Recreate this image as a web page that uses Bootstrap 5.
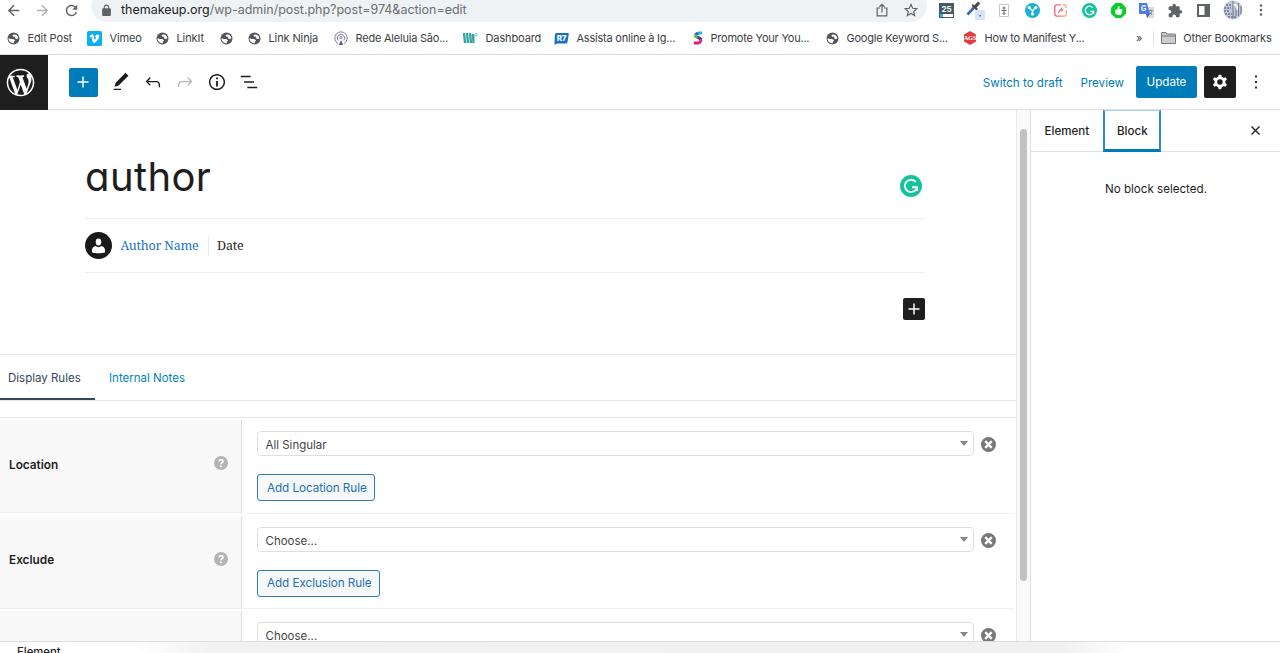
<!DOCTYPE html>
<html lang="en">
<head>
<meta charset="utf-8">
<meta name="viewport" content="width=device-width, initial-scale=1">
<title>Edit Post</title>
<link href="https://cdn.jsdelivr.net/npm/bootstrap@5.3.0/dist/css/bootstrap.min.css" rel="stylesheet">
<style>
body{font-family:Inter,"Liberation Sans",sans-serif;font-size:11.6px;line-height:1.4;color:#1e1e1e;height:653px;overflow:hidden;background:#fff}
svg{display:block;flex:none}
.ic{fill:currentColor}
/* browser chrome */
.addressbar{height:20px;color:#5f6368}
.omnibox{left:91px;width:836px;height:32px;margin-top:-10.5px;border-radius:16px;background:#eff2f4}
.nav-ico{display:grid;grid-template-columns:29px 29px 33px;width:91px;padding-left:5px}
.site{padding-left:10px}
.url{font-size:12.5px;letter-spacing:-.02px;color:#6a6e72;line-height:20px;padding-left:9px;white-space:nowrap}
.url b{font-weight:400;color:#202124}
.exts{display:grid;grid-template-columns:repeat(12,28.63px);justify-items:center;align-items:center;width:344px;margin-right:4px}
.bookmarks{height:35px;padding-top:3px;font-size:11px;letter-spacing:-.12px;color:#3c4043;border-bottom:1px solid #dcdee0;
 display:grid;grid-template-columns:80px 69px 64px 28px 86px 129px 91px 139px 133px 137px 169px 1fr;padding-left:7px;align-items:center;white-space:nowrap}
.bookmarks>div{display:flex;align-items:center;gap:7.5px}
.bookmarks>.long{letter-spacing:-.22px}
.bookmarks>.overflow-end{gap:7px;letter-spacing:-.15px}
.rule-v{height:15px;margin-left:4px}
/* editor header */
.ed-head{height:55px;border-bottom:1px solid #e0e0e0}
.wp-logo{width:47.5px;height:55px;background:#1e1e1e;padding-left:6px}
.tools{gap:10px;margin-left:21.3px}
.btn-sq{width:29px;height:29px;background:#007cba;border-radius:2px;margin-right:2px}
.wplink{color:#007cba;text-decoration:none;padding-top:2px}
.ed-head .btn-update{background:#007cba;color:#fff;width:61px;height:32px;border-radius:2px;padding:2px 0 0;font-size:11.6px;border:0}
.btn-cog{width:32px;height:32px;background:#1e1e1e;border-radius:2px;margin-left:7px}
.more{margin:0 13px 0 9px}
/* main area */
.stage{height:531px}
.canvas{width:1016px}
.post-block{width:840px;margin-left:85px}
.post-title{font-size:40px;font-weight:400;font-feature-settings:"cv11","ss03";letter-spacing:.4px;height:109px;padding-top:40px;line-height:54px;border-bottom:1px solid #e8eef2;margin:0}
.gram-badge{right:3px;top:65px}
.meta{height:54px;border-bottom:1px solid #e8eef2;font-family:"Noto Serif","Liberation Serif","DejaVu Serif",serif;font-size:12.5px;letter-spacing:-.2px;gap:8.5px}
.avatar{width:27px;height:27px}
.meta .byline{color:#1e73be;padding-right:9px;border-right:1px solid #e8e8e8;line-height:20px}
.inserter{width:22px;height:22px;background:#1e1e1e;border-radius:2px;margin-top:25px}
.panel-tabs{height:47px;margin-top:34px;border-top:1px solid #e2ecf1;border-bottom:1px solid #dfe7ec}
.panel-tabs a{font-size:11.5px;text-decoration:none;color:#0085ba;height:45px;line-height:46px;padding:0 14px 0 8px}
.panel-tabs a.on{color:#32475a;border-bottom:2px solid #32475a;width:95px;margin-right:6px}
.rules{margin-top:16px;border-top:1px solid #dfe7ec;padding-top:2px}
.rule{height:95.5px}
.rule-label{width:242px;height:93px;background:#f9f9f9;border-right:1px solid #dcdfe1;border-bottom:1px solid #ededed;padding:0 13px 2px 9px;font-weight:600;font-size:11.8px}
.rule-body{width:770px;height:93.5px;border-bottom:1px solid #efefef;margin-left:2px;padding:11px 0 0 13px}
.picker-row{gap:7px}
.picker{width:717px;height:25px;border:1px solid #dedede;border-radius:4px;padding:4px 5px 0 7.5px;font-size:11.5px;color:#444}
.caret{border:4px solid transparent;border-top:5px solid #888;border-bottom:0;margin-top:-4px}
.drop{margin-top:2px}
.btn-rule{--bs-btn-color:#2271b1;--bs-btn-border-color:#2f7fbb;--bs-btn-bg:#f6f7f7;--bs-btn-padding-x:9px;--bs-btn-font-size:11.7px;--bs-btn-border-radius:3px;padding-top:2px;padding-bottom:0;height:27px;margin-top:18px;width:118px;white-space:nowrap;letter-spacing:-.05px}
.btn-rule.wide{width:122.5px}
.track{width:14px;background:#fafafa;border-left:1px solid #e9e9e9}
.thumb{width:7px;height:452px;background:#c1c1c1;border-radius:4px;margin:19px auto 0 3px}
.side{border-left:1.5px solid #e0e0e0}
.side-tabs{height:42px;border-bottom:1px solid #e0e0e0;font-weight:500}
.side-tabs .tab-off{padding:1px 14px 0 13.5px}
.side-tabs .block-tab{width:58px;height:42px;padding-top:4px;border:2px solid #2a8fc6;border-top:1px solid #a8d3e8;border-bottom:3px solid #007cba}
.side-tabs svg{margin-right:17px}
.empty-note{margin-top:29px;padding-left:1px}
.foot{height:12px;border-top:1px solid #dedede;background:linear-gradient(90deg,#fff 135px,#f1f1f1 215px,#f0f0f0 1060px,#fff 1130px);overflow:hidden;padding-left:17px;line-height:20px;font-size:11.3px;font-weight:500}
</style>
</head>
<body class="d-flex flex-column">
<svg width="0" height="0" class="position-absolute">
 <defs>
  <symbol id="globe" viewBox="0 0 24 24"><circle cx="12" cy="12" r="11" fill="#505458"/><path fill="#fff" d="M3 14.500 3 11l3.500 1.800 4.500.2c2 0 2.200 1.600 3.600 2.200-.2 2.200-2.400 2.500-2.400 5.800-4.300 0-8-2.600-9.200-6.500zM12.500 4.500c-2 .4-3 2-2 3.300 1.300 1.400 3.300.2 4.300 1.600.7 1.200 0 2.800 1.600 3.600 1.500.5 3-.2 4.600-1.400C20.800 7.500 17.500 4 12.500 4.500z"/></symbol>
  <symbol id="cross" viewBox="0 0 16 16"><circle cx="8" cy="8" r="8" fill="#777"/><path d="M4.500 4.500l7 7m0-7l-7 7" stroke="#fff" stroke-width="2.600"/></symbol>
  <symbol id="help" viewBox="0 0 14 14"><circle cx="7" cy="7" r="7" fill="#b4b4b4"/><path d="M5 5.300C5 3.300 9 3.300 9 5.400 9 6.700 7 6.700 7 8.200" fill="none" stroke="#fff" stroke-width="1.500"/><circle cx="7" cy="10.200" r=".95" fill="#fff"/></symbol>
  <symbol id="plus" viewBox="0 0 24 24"><path fill="#fff" d="M18 11.200h-5.200V6h-1.600v5.200H6v1.600h5.200V18h1.600v-5.200H18z"/></symbol>
  <symbol id="gram" viewBox="0 0 22 22"><circle cx="11" cy="11" r="11" fill="#15c39a"/><path d="M15.800 6.900A6.200 6.200 0 1 0 16.900 13M12 12.300h5V16" fill="none" stroke="#fff" stroke-width="1.900"/></symbol>
 </defs>
</svg>

<div class="addressbar d-flex align-items-center position-relative">
 <div class="omnibox position-absolute top-0"></div>
 <div class="nav-ico">
  <svg class="ic" width="17" height="17" viewBox="0 0 24 24"><path d="M20 11H7.830l5.590-5.590L12 4l-8 8 8 8 1.410-1.410L7.830 13H20v-2z"/></svg>
  <svg class="ic" width="17" height="17" viewBox="0 0 24 24" opacity=".5"><path d="M12 4l-1.410 1.410L16.170 11H4v2h12.170l-5.580 5.590L12 20l8-8z"/></svg>
  <svg class="ic" width="17" height="17" viewBox="0 0 24 24"><path d="M17.650 6.350A7.958 7.958 0 0012 4c-4.420 0-7.990 3.580-7.990 8s3.570 8 7.990 8c3.730 0 6.840-2.550 7.730-6h-2.080A5.990 5.990 0 0112 18c-3.310 0-6-2.690-6-6s2.690-6 6-6c1.660 0 3.140.69 4.220 1.780L13 11h7V4l-2.350 2.350z"/></svg>
 </div>
 <div class="site d-flex align-items-center flex-grow-1 position-relative">
  <svg class="ic" width="11" height="12" viewBox="3 0 18 22"><path d="M18 8h-1V6c0-2.760-2.240-5-5-5S7 3.240 7 6v2H6c-1.100 0-2 .9-2 2v10c0 1.100.9 2 2 2h12c1.100 0 2-.9 2-2V10c0-1.100-.9-2-2-2zM9 8V6c0-1.660 1.340-3 3-3s3 1.340 3 3v2z"/></svg>
  <span class="url flex-grow-1"><b>themakeup.org</b>/wp-admin/post.php?post=974&amp;action=edit</span>
  <svg width="12" height="14" viewBox="0 0 12 14" fill="none" stroke="#5f6368" stroke-width="1.200"><path d="M4 5H1.200v7.800h9.600V5H8M6 9.500V1.500M3.500 3.700L6 1.300l2.500 2.400"/></svg>
  <svg class="ms-3" style="margin-right:14px" width="14" height="14" viewBox="0 0 24 24" fill="none" stroke="#5f6368" stroke-width="2"><path d="M12 2.500l2.900 6.600 7.100.7-5.400 4.700 1.600 7-6.200-3.700-6.200 3.700 1.600-7L2 9.800l7.100-.7z"/></svg>
 </div>
 <div class="exts position-relative">
  <svg width="15" height="15" viewBox="0 0 15 15"><path fill="#455a64" d="M0 0h15v15H0z"/><path fill="#fff" d="M1 11h13v3H1z"/><path fill="#29b6f6" d="M1 11h3v3H1z"/><text x="7.500" y="8.500" font-size="8" font-weight="700" fill="#fff" text-anchor="middle">25</text></svg>
  <svg width="20" height="20" viewBox="0 0 20 20"><path d="M2.500 14.500L9 7.500" stroke="#4067b5" stroke-width="2.600"/><path d="M8 5.500l3.500 3.500" stroke="#4a4a4a" stroke-width="2.400" stroke-linecap="round"/><path d="M10.500 6.500l2.700-3" stroke="#4a4a4a" stroke-width="3.200" stroke-linecap="round"/><rect x="10" y="10" width="10" height="10" rx="1.500" fill="#d5e3fb"/><path fill="#456" d="M14.500 15h1.300v1.400h-1.300z"/></svg>
  <svg width="10" height="13" viewBox="0 0 10 13" fill="none" stroke="#666"><path d="M.5.500h9v12h-9z" stroke="#c5c5c5"/><path d="M5 2.500v3M3.500 4h3M2.500 6.500h5M5 7v3.500M3.500 9L5 10.500 6.500 9" stroke-width="1"/></svg>
  <svg width="15" height="15" viewBox="0 0 15 15"><circle cx="7.500" cy="7.500" r="7.500" fill="#1ab1d3"/><path d="M4.300 4.500L7.500 8l3.200-3.500M7.500 8v3.500" fill="none" stroke="#fff" stroke-width="1.400"/><g fill="#fff"><circle cx="4.200" cy="4.500" r="1.600"/><circle cx="10.800" cy="4.500" r="1.600"/><circle cx="7.500" cy="11" r="1.600"/></g></svg>
  <svg width="13" height="13" viewBox="0 0 13 13" fill="none"><defs><linearGradient id="lg"><stop stop-color="#f0566c"/><stop offset="1" stop-color="#f7a26c"/></linearGradient></defs><path d="M7 .8H3A2.200 2.200 0 0 0 .8 3v7A2.200 2.200 0 0 0 3 12.200h7a2.200 2.200 0 0 0 2.200-2.200V6M9 .8h1A2.200 2.200 0 0 1 12.200 3v1" stroke="url(#lg)" stroke-width="1.200"/><path d="M4.500 9L6 5.800h2.500L7.300 7.500M7 5l1.300-1.300" stroke="#ef6a70" stroke-width="1.200"/></svg>
  <svg width="15" height="15"><use href="#gram"/></svg>
  <svg width="15" height="15" viewBox="0 0 15 15"><path d="M4.500 0h6L15 4.500v6L10.500 15h-6L0 10.500v-6z" fill="#05cf28"/><path fill="#fff" d="M4 7l2.300-.6L7.300 3c1.400-.2 1.500.8 1 3h2.400c1 0 .8 1.200.5 2l-.8 3c-.2.800-.6 1-1.400 1H6.500L4 10.500z"/></svg>
  <svg width="15" height="15" viewBox="0 0 15 15"><path fill="#d8dadd" d="M5 4h10v11H8z"/><path fill="#4a7de2" d="M0 0h8l3 11H1a1 1 0 0 1-1-1z"/><path fill="#3367c5" d="M7 11h4l-3 4z"/><text x="4.700" y="7.500" font-size="7" font-weight="700" fill="#fff" text-anchor="middle">G</text><path d="M9.500 7.500H14M11.800 6.500v1M13 8c-.5 2-1.500 3-2.500 3.500M10.500 8.500L13 12" stroke="#777" stroke-width=".8" fill="none"/></svg>
  <svg class="ic" width="15" height="15" viewBox="1 0 23 23"><path d="M20.500 11H19V7c0-1.100-.9-2-2-2h-4V3.500a2.500 2.500 0 00-5 0V5H4c-1.100 0-2 .9-2 2v3.800h1.500a2.700 2.700 0 010 5.400H2V20c0 1.100.9 2 2 2h3.800v-1.500a2.700 2.700 0 015.400 0V22H17c1.100 0 2-.9 2-2v-4h1.500a2.500 2.500 0 000-5z"/></svg>
  <svg width="13" height="13" viewBox="0 0 13 13"><path d="M1 1h11v11H1z" fill="none" stroke="#5f6368" stroke-width="2"/><path fill="#5f6368" d="M7.500 1H12v11H7.500z"/></svg>
  <svg width="20" height="20" viewBox="0 0 20 20"><circle cx="10" cy="10" r="9.600" fill="#c3c9d8"/><path d="M3 5h6M1 8h7M1 11h6M2 14h7M5 17h8" stroke="#6572a0" stroke-width="1.500" stroke-dasharray="2 1"/><path d="M10 1v18M15.500 3v13M13 8v8M18 6v8" stroke="#707a94" stroke-width="1.100"/><path d="M10.500 5c4-1 4 2 3.500 5" stroke="#fff" stroke-width="1.600" fill="none"/></svg>
  <svg class="ic" width="4" height="14" viewBox="0 0 4 14"><circle cx="2" cy="2.500" r="1.300"/><circle cx="2" cy="7" r="1.300"/><circle cx="2" cy="11.500" r="1.300"/></svg>
 </div>
</div>

<div class="bookmarks flex-shrink-0">
 <div><svg width="13" height="13"><use href="#globe"/></svg>Edit Post</div>
 <div><svg width="15" height="15" viewBox="0 0 15 15"><rect width="15" height="15" rx="1.500" fill="#0cb0ef"/><path fill="#fff" d="M2.500 5.300L5 3.300c1.500-.5 1.600 1.500 2.300 4.700.5 1.600 1.700-.8 1.700-1.500 0-.8-.7-.8-1.300-.5C8.500 2.800 12.700 2.400 12.300 5.500 12 7.800 8.700 12 7.200 12 5.300 12 5 6 4.200 5.800c-.3 0-.8.400-1.200.6z"/></svg>Vimeo</div>
 <div><svg width="13" height="13"><use href="#globe"/></svg>LinkIt</div>
 <div><svg width="13" height="13"><use href="#globe"/></svg></div>
 <div><svg width="13" height="13"><use href="#globe"/></svg>Link Ninja</div>
 <div class="long"><svg width="14" height="14" viewBox="0 0 14 14" fill="none" stroke="#8378a5"><path d="M4 12.500a6.200 6.200 0 1 1 6 0" stroke-width="1"/><path d="M4.200 9.500a3.700 3.700 0 1 1 5.600 0"/><circle cx="7" cy="6.500" r="1.200"/><path d="M7 9l2.300 5H4.700z" fill="#6b5b95" stroke="none"/></svg>Rede Aleluia São...</div>
 <div><svg width="15" height="13" viewBox="0 0 15 13"><path d="M1 1l1 10M4 1l1 10M7 1l1 10M10 2l.5 9" stroke="#35a5a3" stroke-width="2.400"/><circle cx="13" cy="2.800" r="1.300" fill="none" stroke="#6cc"/></svg><span>Dashboard</span></div>
 <div class="long"><svg width="15" height="13" viewBox="0 0 15 13"><path fill="#1670c4" d="M3 1h11q1 0 .8 1L13.500 10q-.2 1.500-1.500 1.500H3L.5 13 .8 3Q1 1 3 1z"/><text x="7.500" y="9.300" font-size="8" font-weight="800" fill="#fff" text-anchor="middle">R7</text></svg>Assista online à Ig...</div>
 <div class="long"><svg width="10" height="14" viewBox="0 0 10 14" fill="none" stroke-width="3"><path d="M9 2H5" stroke="#26b5e8"/><path d="M5 2L2 4" stroke="#3556b8"/><path d="M1.500 4L5 7" stroke="#4dbd54"/><path d="M5 6l3.500 3" stroke="#5b3394"/><path d="M8.500 9L6 12.500" stroke="#c92f87"/><path d="M6 12H1" stroke="#ee176b"/></svg>Promote Your You...</div>
 <div class="long"><svg width="13" height="13"><use href="#globe"/></svg>Google Keyword S...</div>
 <div class="long"><svg width="14" height="14" viewBox="0 0 14 14"><path fill="#e23b3d" d="M7 0l6 3.500v7L7 14l-6-3.500v-7z"/><text x="7" y="9.300" font-size="6.500" font-weight="800" fill="#fff" text-anchor="middle" font-family="Liberation Serif">AGS</text></svg>How to Manifest Y...</div>
 <div class="overflow-end"><span class="ps-1">»</span><span class="border-start rule-v"></span><svg width="15" height="12" viewBox="0 0 15 12"><path fill="#ccc" stroke="#777" d="M.5 11.500V1q0-.5.500-.5h4l1 1.500h8q.5 0 .5.500v9zM.5 4h14"/></svg><span>Other Bookmarks</span></div>
</div>

<header class="ed-head d-flex align-items-center flex-shrink-0">
 <div class="wp-logo d-flex align-items-center"><svg width="29" height="29" viewBox="-.5 -.5 21 21" fill="#fff"><path d="M20 10c0-5.510-4.490-10-10-10C4.480 0 0 4.490 0 10c0 5.520 4.480 10 10 10 5.510 0 10-4.480 10-10zM7.780 15.370L4.370 6.220c.55-.02 1.170-.08 1.170-.08.5-.06.44-1.130-.06-1.110 0 0-1.450.11-2.370.11-.18 0-.37 0-.58-.01C4.120 2.690 6.870 1.110 10 1.110c2.330 0 4.450.87 6.050 2.340-.68-.11-1.650.39-1.650 1.580 0 .74.45 1.360.9 2.100.35.61.55 1.360.55 2.460 0 1.490-1.400 5-1.400 5l-3.030-8.370c.54-.02.82-.17.82-.17.5-.05.44-1.250-.06-1.220 0 0-1.440.12-2.380.12-.87 0-2.330-.12-2.330-.12-.5-.03-.56 1.200-.06 1.220l.92.08 1.260 3.410zM17.410 10c.24-.64.74-1.870.43-4.250.7 1.290 1.050 2.710 1.050 4.250 0 3.290-1.730 6.240-4.400 7.780.97-2.590 1.940-5.200 2.920-7.780zM6.100 18.090C3.120 16.650 1.110 13.530 1.110 10c0-1.300.23-2.480.72-3.590C3.250 10.300 4.670 14.200 6.100 18.090zm4.030-6.630l2.580 6.980c-.86.29-1.760.45-2.710.45-.79 0-1.570-.11-2.290-.33.81-2.380 1.620-4.740 2.420-7.100z"/></svg></div>
 <div class="tools d-flex align-items-center">
  <div class="btn-sq d-flex align-items-center justify-content-center"><svg width="22" height="22"><use href="#plus"/></svg></div>
  <svg width="22" height="22" viewBox="0 0 24 24"><path fill="#1e1e1e" d="M20.100 5.100L16.900 2 6.200 12.700l-1.300 4.400 4.500-1.300L20.100 5.100zM4 20.800h8v-1.500H4v1.500z"/></svg>
  <svg width="22" height="22" viewBox="0 0 24 24"><path fill="#1e1e1e" d="M18.300 11.700c-.6-.6-1.400-.9-2.300-.9H6.700l2.900-3.300-1.100-1-4.500 5L8.500 16l1-1-2.700-2.700H16c.5 0 .9.200 1.300.5 1 1 1 3.400 1 4.500v.3h1.500v-.2c0-1.500 0-4.300-1.500-5.700z"/></svg>
  <svg width="22" height="22" viewBox="0 0 24 24"><path fill="#bbb" d="M15.600 6.500l-1.100 1 2.900 3.300H8c-.9 0-1.700.3-2.300.9-1.400 1.500-1.400 4.200-1.400 5.600v.2h1.500v-.3c0-1.100 0-3.500 1-4.500.3-.3.700-.5 1.300-.5h9.200L14.500 15l1.100 1.100 4.600-4.600-4.600-5z"/></svg>
  <svg width="22" height="22" viewBox="0 0 24 24"><path fill="#1e1e1e" d="M12 3.200c-4.800 0-8.800 3.900-8.800 8.800 0 4.800 3.900 8.800 8.800 8.800 4.800 0 8.800-3.900 8.800-8.800 0-4.800-4-8.800-8.800-8.800zm0 16c-4 0-7.200-3.300-7.200-7.200C4.800 8 8 4.800 12 4.800s7.200 3.300 7.200 7.200c0 4-3.200 7.200-7.200 7.200zM11 17h2v-6h-2v6zm0-8h2V7h-2v2z"/></svg>
  <svg width="22" height="22" viewBox="0 0 24 24"><path fill="#1e1e1e" d="M13.800 5.200H3v1.500h10.800V5.200zm-3.600 12v1.500H21v-1.500H10.200zm7.200-6H6.600v1.500h10.800v-1.500z"/></svg>
 </div>
 <div class="d-flex align-items-center ms-auto">
  <a class="wplink" href="#" style="margin-right:18px">Switch to draft</a>
  <a class="wplink" href="#" style="margin-right:12px">Preview</a>
  <button class="btn btn-update">Update</button>
  <div class="btn-cog d-flex align-items-center justify-content-center"><svg width="22" height="22" viewBox="0 0 24 24"><path fill="#fff" fill-rule="evenodd" d="M10.289 4.836A1 1 0 0111.275 4h1.306a1 1 0 01.987.836l.244 1.466c.787.26 1.503.679 2.108 1.218l1.393-.522a1 1 0 011.216.437l.653 1.130a1 1 0 01-.23 1.273l-1.148.944a6.025 6.025 0 010 2.435l1.149.946a1 1 0 01.23 1.272l-.653 1.130a1 1 0 01-1.216.437l-1.394-.522c-.605.54-1.320.958-2.108 1.218l-.244 1.466a1 1 0 01-.987.836h-1.306a1 1 0 01-.986-.836l-.244-1.466a5.995 5.995 0 01-2.108-1.218l-1.394.522a1 1 0 01-1.217-.436l-.653-1.131a1 1 0 01.23-1.272l1.149-.946a6.026 6.026 0 010-2.435l-1.148-.944a1 1 0 01-.23-1.272l.653-1.131a1 1 0 011.217-.437l1.393.522a5.994 5.994 0 012.108-1.218l.244-1.466zM14.929 12a3 3 0 11-6 0 3 3 0 016 0z"/></svg></div>
  <svg class="more" width="22" height="22" viewBox="0 0 24 24"><path fill="#1e1e1e" d="M13 19h-2v-2h2v2zm0-6h-2v-2h2v2zm0-6h-2V5h2v2z"/></svg>
 </div>
</header>

<main class="stage d-flex flex-shrink-0 overflow-hidden">
 <div class="canvas flex-shrink-0">
  <div class="post-block">
   <div class="d-flex justify-content-between position-relative">
    <h1 class="post-title w-100">author</h1>
    <svg class="gram-badge position-absolute" width="22" height="22"><use href="#gram"/></svg>
   </div>
   <div class="meta d-flex align-items-center">
    <svg class="avatar" viewBox="0 0 27 27"><circle cx="13.500" cy="13.500" r="13.500" fill="#1a1a1a"/><ellipse cx="13.500" cy="10" rx="2.800" ry="3.400" fill="#fff"/><path fill="#fff" d="M7 20.500c-.6-4.500 1.500-6 4-6.500 1 1.500 4 1.500 5 0 2.500.5 4.600 2 4 6.500-3 .9-10 .9-13 0z"/></svg>
    <span class="byline">Author Name</span><span>Date</span>
   </div>
   <div class="d-flex justify-content-end"><div class="inserter"><svg width="22" height="22"><use href="#plus"/></svg></div></div>
  </div>
  <nav class="panel-tabs d-flex"><a class="on" href="#">Display Rules</a><a href="#">Internal Notes</a></nav>
  <div class="rules">
   <div class="rule d-flex">
    <div class="rule-label d-flex align-items-center justify-content-between"><span>Location</span><svg class="mb-1" width="14" height="14"><use href="#help"/></svg></div>
    <div class="rule-body"><div class="picker-row d-flex align-items-center"><div class="picker d-flex align-items-center justify-content-between">All Singular<i class="caret"></i></div><svg class="drop" width="15" height="15"><use href="#cross"/></svg></div><button class="btn btn-rule">Add Location Rule</button></div>
   </div>
   <div class="rule d-flex">
    <div class="rule-label d-flex align-items-center justify-content-between"><span>Exclude</span><svg class="mb-1" width="14" height="14"><use href="#help"/></svg></div>
    <div class="rule-body"><div class="picker-row d-flex align-items-center"><div class="picker d-flex align-items-center justify-content-between">Choose...<i class="caret"></i></div><svg class="drop" width="15" height="15"><use href="#cross"/></svg></div><button class="btn btn-rule wide">Add Exclusion Rule</button></div>
   </div>
   <div class="rule d-flex">
    <div class="rule-label"></div>
    <div class="rule-body"><div class="picker-row d-flex align-items-center"><div class="picker d-flex align-items-center justify-content-between">Choose...<i class="caret"></i></div><svg class="drop" width="15" height="15"><use href="#cross"/></svg></div></div>
   </div>
  </div>
 </div>
 <div class="track flex-shrink-0"><div class="thumb"></div></div>
 <aside class="side flex-grow-1">
  <div class="side-tabs d-flex align-items-center">
   <span class="tab-off">Element</span>
   <span class="block-tab d-flex align-items-center justify-content-center">Block</span>
   <svg class="ms-auto" width="15" height="15" viewBox="0 0 15 15"><path d="M3.500 3.500l8 8m0-8l-8 8" stroke="#1e1e1e" stroke-width="1.300"/></svg>
  </div>
  <p class="empty-note text-center">No block selected.</p>
 </aside>
</main>
<footer class="foot flex-shrink-0">Element</footer>
<script src="https://cdn.jsdelivr.net/npm/bootstrap@5.3.0/dist/js/bootstrap.bundle.min.js"></script>
</body>
</html>
